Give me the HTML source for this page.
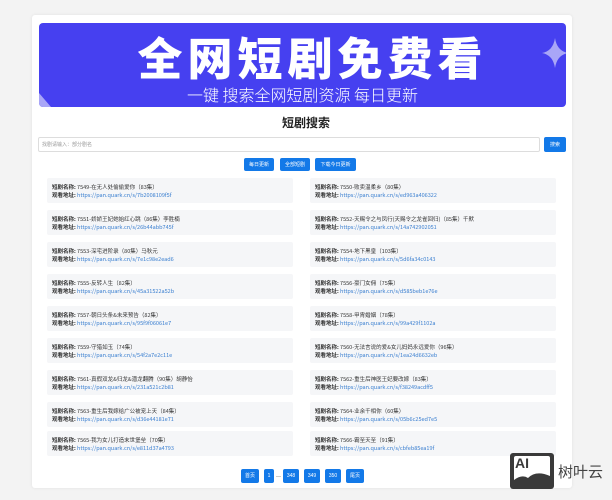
<!DOCTYPE html>
<html><head><meta charset="utf-8"><style>
*{margin:0;padding:0;box-sizing:border-box}
body{width:612px;height:500px;background:#f3f3f3;font-family:"Liberation Sans","Noto Sans CJK SC",sans-serif;position:relative;overflow:hidden}
.card{position:absolute;left:32px;top:15px;width:540px;height:473px;background:#fff;border-radius:3px;box-shadow:0 0 3px rgba(0,0,0,.08)}
.banner{position:absolute;left:39px;top:23px;width:527px;height:84px;background:#4640f0;border-radius:4px;overflow:hidden;color:#fff;text-align:center}
.banner .t{position:absolute;left:20px;right:0;top:5px;font-size:45px;font-weight:900;letter-spacing:5px;line-height:56px;font-family:"Noto Sans CJK SC",sans-serif}
.banner .s{position:absolute;left:0;right:0;top:61px;font-size:16px;line-height:20px;font-family:"Noto Sans CJK SC",sans-serif;font-weight:300}
.h{position:absolute;left:0;width:612px;top:114px;text-align:center;font-size:12px;font-weight:bold;color:#222;font-family:"Noto Sans CJK SC",sans-serif}
.inp{position:absolute;left:38px;top:137px;width:502px;height:15px;border:1px solid #ddd;border-radius:2px;font-size:5px;color:#999;padding:3px 3px;line-height:8px}
.btn{position:absolute;background:#1379e8;color:#fff;font-size:5px;border-radius:2px;text-align:center;font-family:"Noto Sans CJK SC",sans-serif}
.it{position:absolute;width:246px;height:25px;background:#f5f6f8;border-radius:2px;font-size:5.5px;line-height:8px;padding:5px 5px;color:#333;font-family:"Noto Sans CJK SC",sans-serif}
.it b{font-weight:bold}
.it a{color:#3a7fd0;text-decoration:none}
.pg{position:absolute;top:469px;height:14px;background:#1379e8;color:#fff;font-size:5px;line-height:14px;text-align:center;border-radius:2px}
</style></head><body>
<div class="card"></div>
<div class="banner">
<div class="t">全网短剧免费看</div>
<div class="s">一键 搜索全网短剧资源 每日更新</div>
<svg style="position:absolute;right:-2px;top:15px" width="26" height="30" viewBox="0 0 26 30"><path d="M13 0 Q15 13 26 15 Q15 17 13 30 Q11 17 0 15 Q11 13 13 0Z" fill="#a9a6f7"/></svg>
<svg style="position:absolute;left:0;bottom:0" width="12" height="14"><path d="M0 0 L12 14 L0 14Z" fill="#a9a6f7"/></svg>
</div>
<div class="h">短剧搜索</div>
<div class="inp">找剧请输入：部分剧名</div>
<div class="btn" style="left:544px;top:137px;width:22px;height:15px;line-height:15px">搜索</div>
<div class="btn" style="left:244px;top:158px;width:30px;height:13px;line-height:13px">每日更新</div>
<div class="btn" style="left:280px;top:158px;width:30px;height:13px;line-height:13px">全部短剧</div>
<div class="btn" style="left:315px;top:158px;width:41px;height:13px;line-height:13px">下载今日更新</div>

<div class="it" style="left:47px;top:178px"><b>短剧名称:</b> 7549-在无人处偷偷爱你（83集）<br><b>观看地址:</b> <a>https://pan.quark.cn/s/7b2008109f5f</a></div>
<div class="it" style="left:310px;top:178px"><b>短剧名称:</b> 7550-败卖温柔乡（80集）<br><b>观看地址:</b> <a>https://pan.quark.cn/s/ed963a406322</a></div>
<div class="it" style="left:47px;top:210px"><b>短剧名称:</b> 7551-娇娇王妃她始红心跳（86集）李胜楠<br><b>观看地址:</b> <a>https://pan.quark.cn/s/26b44abb745f</a></div>
<div class="it" style="left:310px;top:210px"><b>短剧名称:</b> 7552-天赐令之与凤行(天赐令之龙雀回归)（85集）千默<br><b>观看地址:</b> <a>https://pan.quark.cn/s/14a742902051</a></div>
<div class="it" style="left:47px;top:242px"><b>短剧名称:</b> 7553-深宅进阶录（80集）马秋元<br><b>观看地址:</b> <a>https://pan.quark.cn/s/7e1c98e2ead6</a></div>
<div class="it" style="left:310px;top:242px"><b>短剧名称:</b> 7554-地下黑皇（103集）<br><b>观看地址:</b> <a>https://pan.quark.cn/s/5d6fa34c0143</a></div>
<div class="it" style="left:47px;top:274px"><b>短剧名称:</b> 7555-反转人生（82集）<br><b>观看地址:</b> <a>https://pan.quark.cn/s/45a31522a52b</a></div>
<div class="it" style="left:310px;top:274px"><b>短剧名称:</b> 7556-豪门女佣（75集）<br><b>观看地址:</b> <a>https://pan.quark.cn/s/d585beb1e76e</a></div>
<div class="it" style="left:47px;top:306px"><b>短剧名称:</b> 7557-朝日头条&未来预告（82集）<br><b>观看地址:</b> <a>https://pan.quark.cn/s/95f9f06061e7</a></div>
<div class="it" style="left:310px;top:306px"><b>短剧名称:</b> 7558-甲胄婚姻（78集）<br><b>观看地址:</b> <a>https://pan.quark.cn/s/99a429f1102a</a></div>
<div class="it" style="left:47px;top:338px"><b>短剧名称:</b> 7559-守猎如玉（74集）<br><b>观看地址:</b> <a>https://pan.quark.cn/s/54f2a7e2c11e</a></div>
<div class="it" style="left:310px;top:338px"><b>短剧名称:</b> 7560-无法言说的爱&女儿妈妈永远爱你（96集）<br><b>观看地址:</b> <a>https://pan.quark.cn/s/1ea24d6632eb</a></div>
<div class="it" style="left:47px;top:370px"><b>短剧名称:</b> 7561-真假双龙&归龙&潜龙翻腾（90集）胡静怡<br><b>观看地址:</b> <a>https://pan.quark.cn/s/231a521c2b81</a></div>
<div class="it" style="left:310px;top:370px"><b>短剧名称:</b> 7562-重生后神医王妃要改嫁（83集）<br><b>观看地址:</b> <a>https://pan.quark.cn/s/f38249acdff5</a></div>
<div class="it" style="left:47px;top:402px"><b>短剧名称:</b> 7563-重生后我嫁给广公被宠上天（84集）<br><b>观看地址:</b> <a>https://pan.quark.cn/s/d36e44181e71</a></div>
<div class="it" style="left:310px;top:402px"><b>短剧名称:</b> 7564-业余千相你（60集）<br><b>观看地址:</b> <a>https://pan.quark.cn/s/05b6c25ed7e5</a></div>
<div class="it" style="left:47px;top:431px"><b>短剧名称:</b> 7565-我为女儿打造末世堡垒（70集）<br><b>观看地址:</b> <a>https://pan.quark.cn/s/e811d37a4793</a></div>
<div class="it" style="left:310px;top:431px"><b>短剧名称:</b> 7566-霸至天至（91集）<br><b>观看地址:</b> <a>https://pan.quark.cn/s/cbfeb85ea19f</a></div>

<div class="pg" style="left:241px;width:18px">首页</div>
<div class="pg" style="left:264px;width:10px">1</div>
<div style="position:absolute;left:276px;top:476px;width:5px;height:1px;background:#ccc"></div>
<div class="pg" style="left:283px;width:16px">348</div>
<div class="pg" style="left:304px;width:16px">349</div>
<div class="pg" style="left:325px;width:16px">350</div>
<div class="pg" style="left:346px;width:18px">尾页</div>

<div style="position:absolute;left:510px;top:453px;width:44px;height:36px;background:#3a3a3a;border-radius:3px"></div>
<div style="position:absolute;left:514px;top:456px;width:36px;height:30px;background:#fff;border-radius:2px"></div>
<div style="position:absolute;left:515px;top:455px;font-size:14px;font-weight:bold;color:#3a3a3a;font-family:'Liberation Sans',sans-serif">AI</div>
<svg style="position:absolute;left:514px;top:468px" width="36" height="18"><path d="M0 18 L0 12 Q8 6 14 10 Q22 2 36 8 L36 18Z" fill="#3a3a3a"/></svg>
<div style="position:absolute;left:558px;top:461px;font-size:15px;color:#444;font-family:'Noto Sans CJK SC',sans-serif">树叶云</div>
</body></html>
